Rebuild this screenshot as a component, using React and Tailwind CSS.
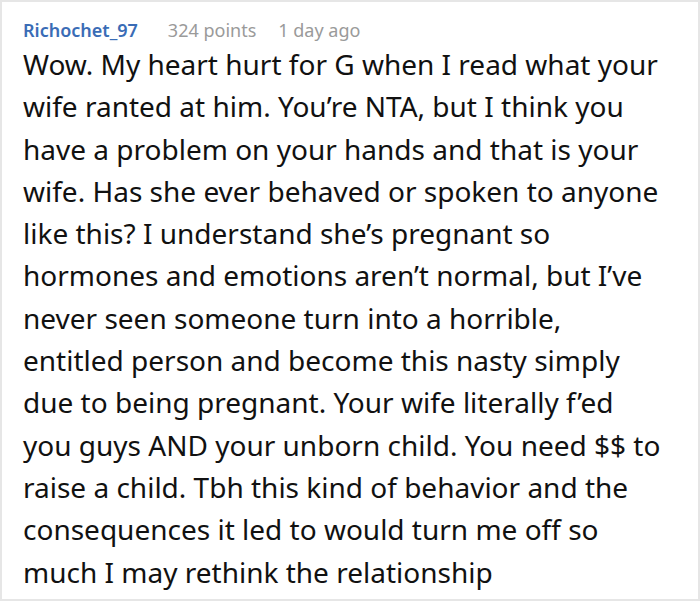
const lines = [
  'Wow. My heart hurt for G when I read what your',
  'wife ranted at him. You’re NTA, but I think you',
  'have a problem on your hands and that is your',
  'wife. Has she ever behaved or spoken to anyone',
  'like this? I understand she’s pregnant so',
  'hormones and emotions aren’t normal, but I’ve',
  'never seen someone turn into a horrible,',
  'entitled person and become this nasty simply',
  'due to being pregnant. Your wife literally f’ed',
  'you guys AND your unborn child. You need $$ to',
  'raise a child. Tbh this kind of behavior and the',
  'consequences it led to would turn me off so',
  'much I may rethink the relationship',
];

export default function App() {
  return (
    <div className="w-[700px] h-[601px] bg-white border-2 border-[#e6e6e6] pl-[21px] pt-[16px] font-['Noto_Sans',sans-serif] overflow-hidden">
      {/* Comment header */}
      <div className="flex items-baseline text-[18px] leading-[24px]">
        <span className="font-semibold text-[#3a6cb6]">Richochet_97</span>
        <span className="ml-[30px] text-[#9a9a9a]">324 points</span>
        <span className="ml-[22px] text-[#9a9a9a]">1 day ago</span>
      </div>

      {/* Comment body */}
      <div className="mt-[1px] text-[28px] leading-[42.3px] text-[#111]">
        {lines.map((line) => (
          <div key={line} className="whitespace-nowrap">{line}</div>
        ))}
      </div>
    </div>
  );
}
